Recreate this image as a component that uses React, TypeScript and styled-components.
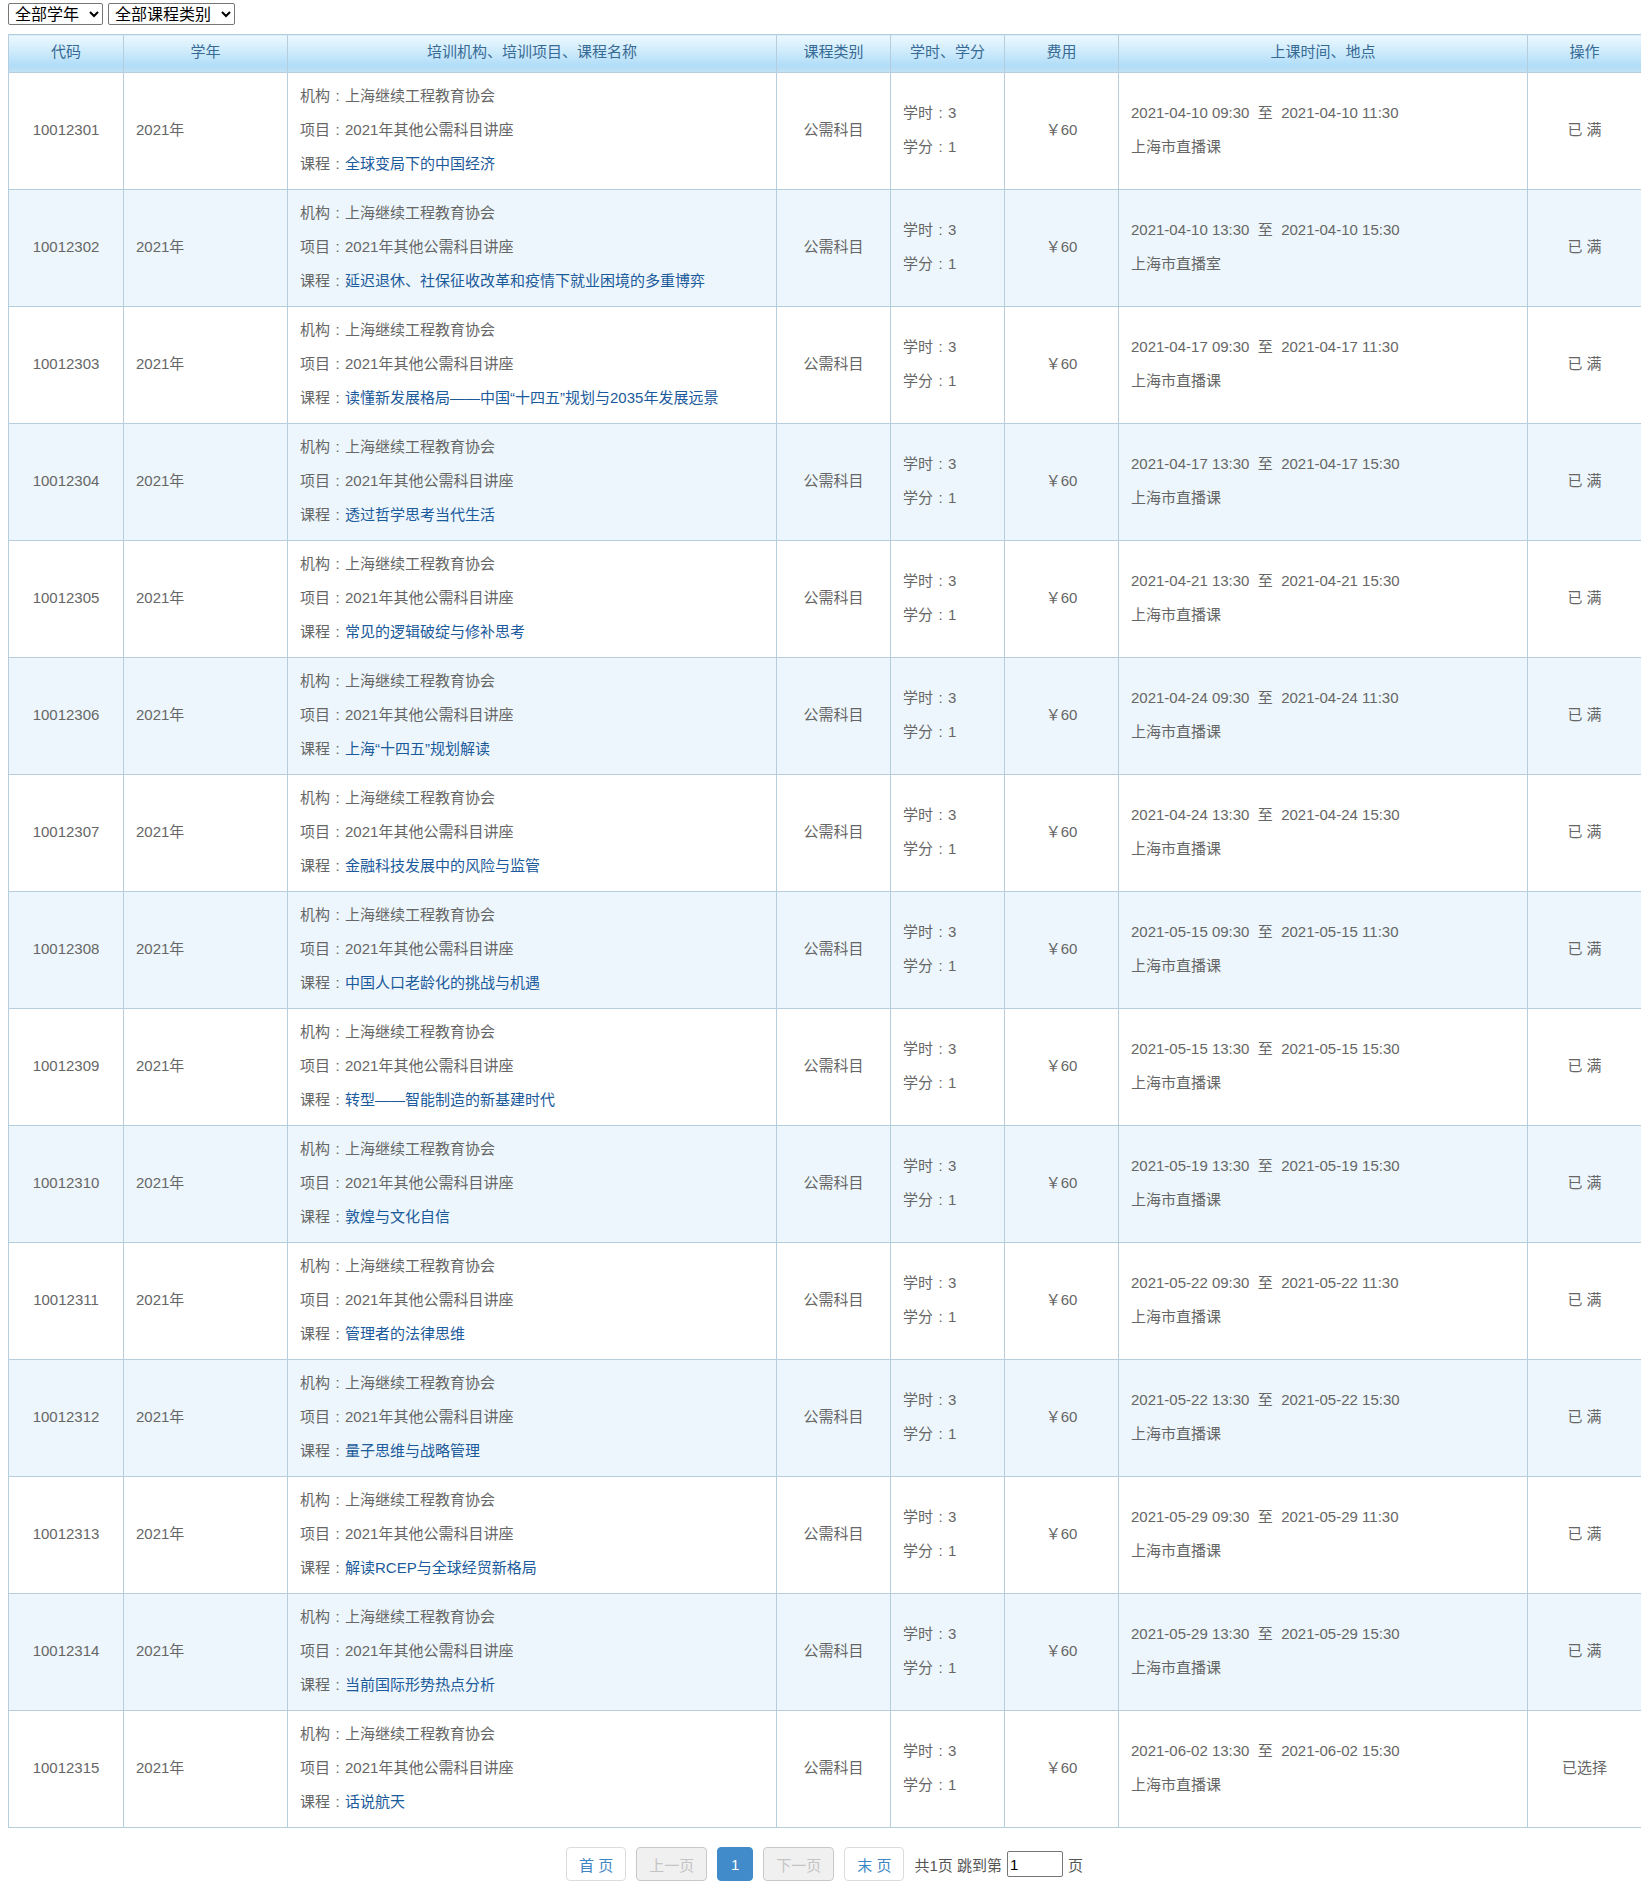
import React from "react";
import styled, { createGlobalStyle } from "styled-components";

const GlobalStyle = createGlobalStyle`
  html, body { background: #fff; }
  body {
    margin: 3px 8px 0;
    font-family: "Liberation Sans", "Noto Sans CJK SC", sans-serif;
  }
`;

const Page = styled.div`
  display: flex;
  flex-direction: column;
`;

const Toolbar = styled.div`
  display: flex;
  gap: 5px;
  height: 22px;
  margin-bottom: 9px;
`;

const Select = styled.select<{ $w: number }>`
  width: ${(p) => p.$w}px;
  height: 22px;
  padding: 0 0 0 2px;
  font-family: "Liberation Sans", "Noto Sans CJK SC", sans-serif;
  font-size: 16px;
  line-height: 20px;
  color: #000;
  background: #fff;
  border: 1px solid #767676;
  border-radius: 2px;
`;

const Table = styled.table`
  width: 100%;
  border-collapse: collapse;
  table-layout: fixed;
  border: 1px solid #b6cddd;
  font-size: 15px;
  color: #666;
`;

const HeadCell = styled.th`
  height: 34px;
  padding: 0 0 3px;
  line-height: 34px;
  font-weight: normal;
  font-size: 15px;
  color: #376a94;
  text-align: center;
  border: 1px solid #b6cddd;
  background: linear-gradient(to bottom, #ecf9ff 0%, #cdeafb 45%, #b0dcf8 82%, #c3e2f4 100%);
`;

const Row = styled.tr<{ $alt: boolean }>`
  background: ${(p) => (p.$alt ? "#edf6fc" : "#fff")};
`;

const Cell = styled.td<{ $align?: "left" | "center" }>`
  padding: 6px 12px 8px;
  line-height: 34px;
  text-align: ${(p) => p.$align || "left"};
  vertical-align: middle;
  border: 1px solid #b6cddd;
  white-space: nowrap;
  overflow: hidden;
`;

const Line = styled.div`
  line-height: 34px;
`;

const Colon = styled.span`
  display: inline-block;
  width: 15px;
  text-align: center;
`;

const CourseLink = styled.a`
  color: #1b5a9b;
  text-decoration: none;
  cursor: pointer;
`;

const Pager = styled.div`
  display: flex;
  justify-content: center;
  align-items: center;
  gap: 10px;
  margin: 19px 0 11px;
  font-size: 15px;
  color: #555;
`;

const PageButton = styled.span<{ $kind: "normal" | "disabled" | "active" }>`
  display: inline-flex;
  align-items: center;
  justify-content: center;
  height: 34px;
  min-width: 36px;
  box-sizing: border-box;
  padding: 0 12px;
  border-radius: 4px;
  font-size: 15px;
  border: 1px solid
    ${(p) => (p.$kind === "active" ? "#428bca" : p.$kind === "disabled" ? "#c9c9c9" : "#dcdcdc")};
  background: ${(p) => (p.$kind === "active" ? "#428bca" : p.$kind === "disabled" ? "#f0f0f0" : "#fff")};
  color: ${(p) => (p.$kind === "active" ? "#fff" : p.$kind === "disabled" ? "#c4c4c4" : "#3d86c6")};
  white-space: pre;
  cursor: pointer;
`;

const JumpGroup = styled.span`
  display: inline-flex;
  align-items: center;
  gap: 5px;
  white-space: pre;
  color: #555;
`;

const JumpInput = styled.input`
  width: 56px;
  height: 26px;
  box-sizing: border-box;
  padding: 0 2px;
  font-family: "Liberation Sans", "Noto Sans CJK SC", sans-serif;
  font-size: 15px;
  color: #000;
  border: 1px solid #767676;
  border-radius: 2px;
`;

type Course = {
  code: string;
  name: string;
  date: string;
  start: string;
  end: string;
  place: string;
  op: string;
};

const rows: Course[] = [
  { code: "10012301", name: "全球变局下的中国经济", date: "2021-04-10", start: "09:30", end: "11:30", place: "上海市直播课", op: "已 满" },
  { code: "10012302", name: "延迟退休、社保征收改革和疫情下就业困境的多重博弈", date: "2021-04-10", start: "13:30", end: "15:30", place: "上海市直播室", op: "已 满" },
  { code: "10012303", name: "读懂新发展格局——中国“十四五”规划与2035年发展远景", date: "2021-04-17", start: "09:30", end: "11:30", place: "上海市直播课", op: "已 满" },
  { code: "10012304", name: "透过哲学思考当代生活", date: "2021-04-17", start: "13:30", end: "15:30", place: "上海市直播课", op: "已 满" },
  { code: "10012305", name: "常见的逻辑破绽与修补思考", date: "2021-04-21", start: "13:30", end: "15:30", place: "上海市直播课", op: "已 满" },
  { code: "10012306", name: "上海“十四五”规划解读", date: "2021-04-24", start: "09:30", end: "11:30", place: "上海市直播课", op: "已 满" },
  { code: "10012307", name: "金融科技发展中的风险与监管", date: "2021-04-24", start: "13:30", end: "15:30", place: "上海市直播课", op: "已 满" },
  { code: "10012308", name: "中国人口老龄化的挑战与机遇", date: "2021-05-15", start: "09:30", end: "11:30", place: "上海市直播课", op: "已 满" },
  { code: "10012309", name: "转型——智能制造的新基建时代", date: "2021-05-15", start: "13:30", end: "15:30", place: "上海市直播课", op: "已 满" },
  { code: "10012310", name: "敦煌与文化自信", date: "2021-05-19", start: "13:30", end: "15:30", place: "上海市直播课", op: "已 满" },
  { code: "10012311", name: "管理者的法律思维", date: "2021-05-22", start: "09:30", end: "11:30", place: "上海市直播课", op: "已 满" },
  { code: "10012312", name: "量子思维与战略管理", date: "2021-05-22", start: "13:30", end: "15:30", place: "上海市直播课", op: "已 满" },
  { code: "10012313", name: "解读RCEP与全球经贸新格局", date: "2021-05-29", start: "09:30", end: "11:30", place: "上海市直播课", op: "已 满" },
  { code: "10012314", name: "当前国际形势热点分析", date: "2021-05-29", start: "13:30", end: "15:30", place: "上海市直播课", op: "已 满" },
  { code: "10012315", name: "话说航天", date: "2021-06-02", start: "13:30", end: "15:30", place: "上海市直播课", op: "已选择" },
];

const columns: { title: string; width: number }[] = [
  { title: "代码", width: 115 },
  { title: "学年", width: 164 },
  { title: "培训机构、培训项目、课程名称", width: 489 },
  { title: "课程类别", width: 114 },
  { title: "学时、学分", width: 114 },
  { title: "费用", width: 114 },
  { title: "上课时间、地点", width: 409 },
  { title: "操作", width: 114 },
];

export default function App() {
  return (
    <Page>
      <GlobalStyle />
      <Toolbar>
        <Select $w={95} defaultValue="all">
          <option value="all">全部学年</option>
          <option value="2021">2021年</option>
        </Select>
        <Select $w={127} defaultValue="all">
          <option value="all">全部课程类别</option>
          <option value="public">公需科目</option>
        </Select>
      </Toolbar>
      <Table>
        <colgroup>
          {columns.map((c) => (
            <col key={c.title} style={{ width: c.width }} />
          ))}
        </colgroup>
        <thead>
          <tr>
            {columns.map((c) => (
              <HeadCell key={c.title}>{c.title}</HeadCell>
            ))}
          </tr>
        </thead>
        <tbody>
          {rows.map((r, i) => (
            <Row key={r.code} $alt={i % 2 === 1}>
              <Cell $align="center">{r.code}</Cell>
              <Cell>2021年</Cell>
              <Cell>
                <Line>
                  机构<Colon>:</Colon>上海继续工程教育协会
                </Line>
                <Line>
                  项目<Colon>:</Colon>2021年其他公需科目讲座
                </Line>
                <Line>
                  课程<Colon>:</Colon>
                  <CourseLink>{r.name}</CourseLink>
                </Line>
              </Cell>
              <Cell $align="center">公需科目</Cell>
              <Cell>
                <Line>
                  学时<Colon>:</Colon>3
                </Line>
                <Line>
                  学分<Colon>:</Colon>1
                </Line>
              </Cell>
              <Cell $align="center">￥60</Cell>
              <Cell>
                <Line>
                  {r.date} {r.start}
                  {"\u00a0\u00a0"}至{"\u00a0\u00a0"}
                  {r.date} {r.end}
                </Line>
                <Line>{r.place}</Line>
              </Cell>
              <Cell $align="center">{r.op}</Cell>
            </Row>
          ))}
        </tbody>
      </Table>
      <Pager>
        <PageButton $kind="normal">首 页</PageButton>
        <PageButton $kind="disabled">上一页</PageButton>
        <PageButton $kind="active">1</PageButton>
        <PageButton $kind="disabled">下一页</PageButton>
        <PageButton $kind="normal">末 页</PageButton>
        <JumpGroup>
          共1页 跳到第
          <JumpInput defaultValue="1" />
          页
        </JumpGroup>
      </Pager>
    </Page>
  );
}
